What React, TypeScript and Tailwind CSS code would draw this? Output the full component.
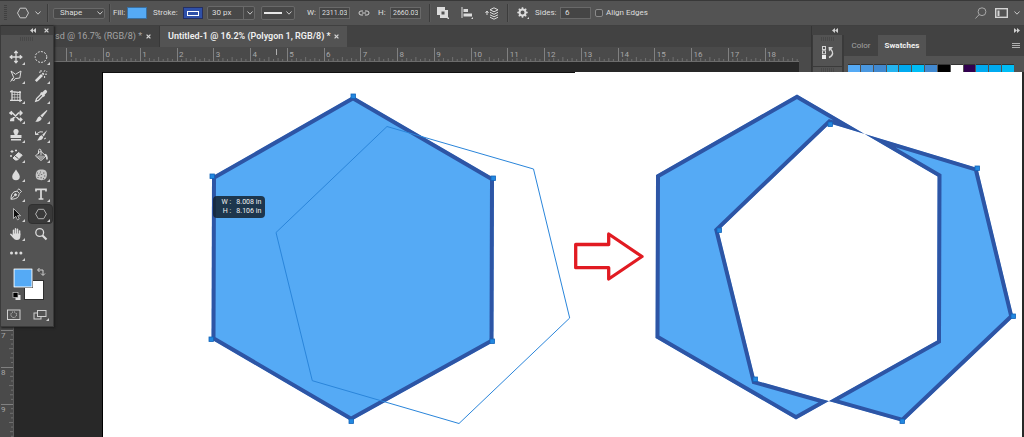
import React, { useState } from "react";

const swatches = [
  "bg-[#55aaf5]",
  "bg-[#4a98e0]",
  "bg-[#4189d0]",
  "bg-[#24b4f0]",
  "bg-[#00aaf0]",
  "bg-[#00bdf5]",
  "bg-[#4189d0]",
  "bg-black",
  "bg-white",
  "bg-[#32004f]",
  "bg-[#00aaf0]",
  "bg-[#00aaf0]",
  "bg-[#00bdf5]",
];

const Chevron = ({ className = "" }: { className?: string }) => (
  <svg viewBox="0 0 6 6" className={`w-1.5 h-1.5 shrink-0 ${className}`}>
    <path d="M0.5 1.5 3 4.2 5.5 1.5" fill="none" stroke="#c8c8c8" />
  </svg>
);

const DoubleArrow = ({ flip = false }: { flip?: boolean }) => (
  <svg viewBox="0 0 6 5" className="w-1.5 h-[5px]">
    <path
      d={flip ? "M0 0 3 2.5 0 5zM3 0 6 2.5 3 5z" : "M3 0 0 2.5 3 5zM6 0 3 2.5 6 5z"}
      fill="#d0d0d0"
    />
  </svg>
);

const Close = () => (
  <svg viewBox="0 0 6 6" className="w-[5px] h-[5px]">
    <path d="M0.7 0.7 5.3 5.3M5.3 0.7 0.7 5.3" stroke="#d4d4d4" strokeWidth="1.5" />
  </svg>
);

const Divider = () => <div className="w-0.5 h-[18px] shrink-0 border-l border-[#3c3c3c] bg-[#5a5a5a]" />;

const Grip = () => (
  <svg viewBox="0 0 14 4" className="w-3.5 h-1">
    <path d="M0 1H14M0 3H14" stroke="#3e3e3e" strokeDasharray="1 1" />
  </svg>
);

const tools: { name: string; icon: React.ReactNode; plain?: boolean }[] = [
  {
    name: "Move",
    icon: <path d="M7 2v10M2 7h10M5.3 3.2 7 1.2l1.7 2M5.3 10.8 7 12.8l1.7-2M3.2 5.3 1.2 7l2 1.7M10.8 5.3l2 1.7-2 1.7" strokeWidth="1.3" />,
  },
  { name: "Elliptical Marquee", icon: <ellipse cx="7" cy="7" rx="5.8" ry="5.4" strokeDasharray="2 1.2" /> },
  { name: "Polygonal Lasso", icon: <path d="M2 2l4.5 3.3L12 2l-1.2 7-4.6.6L4.6 12 2.8 10l2-1.2zM4 9l-2.4 3.6" /> },
  {
    name: "Magic Wand",
    icon: (
      <>
        <path d="M1.8 12.2 8 6" strokeWidth="2.6" />
        <path d="m8.5 5.5 1.2-1.2" strokeWidth="2" />
        <path d="M7 1v2M5 3.2h1.6M11 1.2l-1 1.6M11 5.2h2M10.6 7v2M12.4 2.6h.8" />
      </>
    ),
  },
  {
    name: "Perspective Crop",
    icon: (
      <>
        <path d="M3 1v11M1 2.5l11 1.2M11 2v11M1 11.3h12" strokeWidth="1.3" />
        <path d="M5.7 3v8M8.4 3.3v8M3 5.5h8M3 8.3h8" strokeWidth=".6" />
      </>
    ),
  },
  {
    name: "Eyedropper",
    icon: (
      <>
        <path d="M8 4.2 2.6 9.6l-.9 2.7 2.7-.9L9.8 6" strokeWidth="1.3" />
        <path d="m6.8 3.6 3.6 3.6" strokeWidth="2" />
        <path d="m9 5 2.4-2.4" strokeWidth="3.4" strokeLinecap="round" />
      </>
    ),
  },
  {
    name: "Content-Aware Move",
    icon: <path d="M1 4h2.5L10 10.5h2.5M1.5 10.5 4 9.5 9.5 4H13M10.8 1.8 13 4l-2.2 2.2M4.5 8v3.5H1M3 2.4 1 4l2 1.6M11 8.7l1.8 1.8-1.8 1.7" strokeWidth="1.5" />,
  },
  {
    name: "Brush",
    icon: (
      <>
        <path d="M12.8 1 6.400 6.6l1.800 1.900 5.200-6.800z" fill="#dcdcdc" stroke="none" />
        <path d="M5.800 7.200 7.700 9.200c-.4 2.600-3.200 3.600-6.700 3.600 2-.9 1.900-4.800 4.800-5.600z" fill="#dcdcdc" stroke="none" />
      </>
    ),
  },
  {
    name: "Clone Stamp",
    icon: (
      <path
        d="M7 1a2.5 2.5 0 0 1 2.200 3.900c-.8 1-.8 1.400-.7 2.100H12.500v3h-11V7h4c.1-.7.1-1.100-.7-2.100A2.500 2.500 0 0 1 7 1zM2 11h10v1.500H2z"
        fill="#dcdcdc"
        stroke="none"
      />
    ),
  },
  {
    name: "History Brush",
    icon: (
      <>
        <path d="M13.300 2 8.200 6.800l1.600 1.600zM7.600 7.300 9.300 9.100c-.4 2.700-2.800 3.500-6.300 3.400 1.900-.9 1.800-4.500 4.600-5.200z" fill="#dcdcdc" stroke="none" />
        <path d="M1.500 6.500 6 3.800l3 .2M1.500 3.500v3h3M10 11l2-1" />
      </>
    ),
  },
  {
    name: "Background Eraser",
    icon: (
      <>
        <path d="m5 9 4.500-4.500 3.700 2.700L8.500 12H6.300L4 10z" fill="#dcdcdc" />
        <path d="m6 8 3.500 2.700" stroke="#535353" />
        <path d="M3 2v3M1.500 3.500h3M7 1.500v2M6 2.500h2M2 7v2M1 8h2" />
      </>
    ),
  },
  {
    name: "Paint Bucket",
    icon: (
      <>
        <path d="M6.500 3 12 8l-5 4.500L1.500 8zM4.500 6V2.500c0-1.800 2.500-1.800 2.500 0V7" />
        <path d="m2 8 4-.8 5.500.8L7 12z" fill="#9a9a9a" stroke="none" />
        <path d="M11 6.500c1.500.3 2 1.500 2 5" strokeWidth="1.700" />
      </>
    ),
  },
  {
    name: "Blur",
    icon: <path d="M7 1.500c1.200 2.500 3.800 4.500 3.800 7a3.800 3.800 0 0 1-7.600 0c0-2.500 2.600-4.500 3.800-7z" fill="#dcdcdc" stroke="none" />,
  },
  {
    name: "Sponge",
    icon: (
      <>
        <path d="M3 3c2-2 7-1.800 9 0 1.500 2 1.300 6-.6 8-2 1.600-6.200 1.400-8.400 0C1 9 1.500 5 3 3z" fill="#c6c6c6" stroke="none" />
        <path d="M3 5h1m2-1h1m2 1h1.500M4 7.300h1.500m1.700-.8h1M10 8h1.300M3.500 9.500h1m2 .3h1.300m1.200.8h1M5.500 5.800h.8" stroke="#646464" />
      </>
    ),
  },
  {
    name: "Pen",
    icon: (
      <>
        <path d="M2 12.200c0-3 .6-5.800 3-7.300l3-.8 2.300 2.300-.8 3C8 11.600 5 12.200 2 12.200zM2 12.200l4-4M8.300 3.300l1.600-1.500 2.600 2.600-1.500 1.500" />
        <circle cx="6.500" cy="7.700" r="1" fill="#dcdcdc" />
      </>
    ),
  },
  {
    name: "Type",
    icon: <path d="M2 4.500V2.300h10v2.200M7 2.300v9.500M4.600 12h4.800" strokeWidth="1.700" />,
  },
  {
    name: "Path Selection",
    icon: <path d="M4.500 1.500v10l2.300-2.200 1.700 3.500 1.700-.8-1.600-3.300h3z" fill="#0d0d0d" stroke="#cfcfcf" strokeWidth=".8" />,
  },
  { name: "Polygon", icon: <path d="M4.300 2.300h5.400L12.400 7l-2.700 4.700H4.300L1.600 7z" stroke="#b0b0b0" /> },
  {
    name: "Hand",
    icon: (
      <>
        <path d="M4.500 8V3.200M6.500 7V1.800M8.500 7V2.200M10.600 8V4M4.300 10 1.800 7.300" strokeWidth="1.500" strokeLinecap="round" />
        <path d="M3.800 6.500h7.500v3.200c0 2-1.300 3.300-3.500 3.300-2 0-3-1-4.300-3.300z" fill="#dcdcdc" stroke="none" />
      </>
    ),
  },
  {
    name: "Zoom",
    plain: true,
    icon: (
      <>
        <circle cx="5.700" cy="5.500" r="3.900" strokeWidth="1.300" />
        <path d="m8.500 8.500 4 4" strokeWidth="2.200" />
      </>
    ),
  },
  {
    name: "Edit Toolbar",
    icon: (
      <g fill="#dcdcdc" stroke="none">
        <circle cx="2.500" cy="7" r="1.500" />
        <circle cx="7.200" cy="7" r="1.500" />
        <circle cx="11.900" cy="7" r="1.500" />
      </g>
    ),
  },
];

const ToolPanel = () => {
  const [active, setActive] = useState("Polygon");

  return (
    <aside className="absolute left-0 -top-px w-[54px] bg-[#535353] border border-[#3a3a3a] border-t-[#2e2e2e] shadow-[1px_1px_2px_#1c1c1c]">
      <div className="flex items-center justify-end gap-2 h-[9px] pr-1 bg-[#424242]">
        <DoubleArrow />
        <Close />
      </div>
      <div className="flex justify-center h-3 pt-0.5">
        <Grip />
      </div>
      <div className="grid grid-cols-2 grid-rows-11 h-[216px] pl-0.5">
        {tools.map((tool) => (
          <button
            key={tool.name}
            type="button"
            aria-label={`${tool.name} tool`}
            onClick={() => setActive(tool.name)}
            className={`relative flex items-center justify-center rounded-sm border ${
              active === tool.name ? "bg-[#393939] border-[#303030]" : "border-transparent"
            }`}
          >
            <svg viewBox="0 0 14 14" className="w-3.5 h-3.5" fill="none" stroke="#dcdcdc">
              {tool.icon}
            </svg>
            {!tool.plain && (
              <svg viewBox="0 0 3 3" className="absolute right-0.5 bottom-px w-[3px] h-[3px]">
                <path d="M3 0v3H0z" fill="#d0d0d0" />
              </svg>
            )}
          </button>
        ))}
      </div>
      <svg viewBox="0 0 52 42" className="w-full h-[42px]">
        <rect x="23.500" y="17.500" width="19" height="19" fill="#fff" stroke="#303030" />
        <rect x="12" y="5" width="20" height="20" fill="#303030" />
        <rect x="13" y="6" width="18" height="18" fill="#55aaf5" stroke="#fff" />
        <path d="M37 7h5v5M38.500 5 36.500 7l2 2M40 10.500l2 2 2-2" fill="none" stroke="#d0d0d0" />
        <rect x="14.500" y="32" width="5" height="5" fill="#e0e0e0" />
        <rect x="12" y="29.500" width="5" height="5" fill="#000" stroke="#c8c8c8" strokeWidth=".7" />
      </svg>
      <div className="flex justify-between h-[21px] pt-1 pl-1.5 pr-1">
        <button type="button" aria-label="Quick mask" className="w-3.5 h-3">
          <svg viewBox="0 0 14 12" className="w-3.5 h-3" fill="none" stroke="#d0d0d0">
            <rect x=".5" y="1" width="12.500" height="9.500" />
            <circle cx="6.700" cy="5.700" r="2.800" strokeDasharray="1.200 1" />
          </svg>
        </button>
        <button type="button" aria-label="Screen mode" className="w-4 h-3">
          <svg viewBox="0 0 16 12" className="w-4 h-3" stroke="#d0d0d0">
            <rect x="1" y="4" width="7" height="6" fill="none" />
            <rect x="4.500" y="1.500" width="8.500" height="6" fill="#535353" />
            <path d="M16 9v3h-3z" fill="#d0d0d0" stroke="none" />
          </svg>
        </button>
      </div>
    </aside>
  );
};

const OptionsBar = () => (
  <header className="flex items-center h-[26px] overflow-hidden border-t border-[#383838] border-b border-b-[#404040] text-[8px] text-[#dedede]">
    <svg viewBox="0 0 3 16" className="w-[3px] h-4 ml-1 mr-2.5 shrink-0">
      <path d="M1.500 0V16" stroke="#404040" strokeWidth="3" strokeDasharray="1 1" />
    </svg>
    <svg viewBox="0 0 12 12" className="w-3 h-3 shrink-0">
      <path d="M3.200 1.200h5.600L11.500 6 8.800 10.800H3.200L.5 6z" fill="none" stroke="#c8c8c8" />
    </svg>
    <Chevron className="ml-1.5 mr-1.5" />
    <Divider />
    <div className="relative flex items-center ml-1 mr-1">
      <select aria-label="Tool mode" className="appearance-none w-[52px] h-[11px] pl-1.5 rounded-xs border border-[#696969] bg-[#484848] leading-none">
        <option>Shape</option>
        <option>Path</option>
        <option>Pixels</option>
      </select>
      <Chevron className="absolute right-0.5 pointer-events-none" />
    </div>
    <Divider />
    <span className="w-3.5 ml-0.5 shrink-0">Fill:</span>
    <button type="button" aria-label="Fill colour" className="w-5 h-3 shrink-0 border border-[#3a6fa0] bg-[#55aaf5] mr-1.5" />
    <span className="w-[26px] mr-1 shrink-0">Stroke:</span>
    <button type="button" aria-label="Stroke colour" className="flex items-center justify-center w-5 h-3 shrink-0 border border-[#262f60] bg-[#2f50a8] mr-1">
      <span className="w-3 h-[5px] border border-white" />
    </button>
    <div className="relative flex items-center mr-1.5">
      <select aria-label="Stroke width" className="appearance-none w-[48px] h-3.5 pl-1 rounded-xs border border-[#696969] bg-[#484848] leading-none">
        <option>30 px</option>
      </select>
      <div className="absolute right-0 flex items-center justify-center w-3 h-3.5 border-l border-[#696969] pointer-events-none">
        <Chevron />
      </div>
    </div>
    <button type="button" aria-label="Stroke type" className="flex items-center gap-1 w-[34px] h-3.5 px-0.5 shrink-0 rounded-xs border border-[#696969] bg-[#484848]">
      <span className="flex-1 h-0.5 bg-[#e8e8e8]" />
      <Chevron />
    </button>
    <label htmlFor="w" className="w-3 ml-3">W:</label>
    <input id="w" defaultValue="2311.03" className="w-[31px] h-3 px-0.5 shrink-0 border border-[#696969] bg-[#454545] text-[7px]" />
    <svg viewBox="0 0 12 6" className="w-3 h-1.5 mx-2 shrink-0" fill="none" stroke="#d0d0d0">
      <path d="M5 1H3a2 2 0 0 0 0 4h2M7 1h2a2 2 0 0 1 0 4H7M4 3h4" />
    </svg>
    <label htmlFor="h" className="w-3">H:</label>
    <input id="h" defaultValue="2660.03" className="w-[31px] h-3 px-0.5 mr-2 shrink-0 border border-[#696969] bg-[#454545] text-[7px] text-right" />
    <Divider />
    <div className="flex items-center gap-3 ml-1.5 mr-2">
      <button type="button" aria-label="Path operations">
        <svg viewBox="0 0 12 12" className="block w-3 h-3">
          <path d="M0 0h8v3h3v8H3V8H0zM4.500 4.500v3h3v-3z" fill="#dcdcdc" fillRule="evenodd" />
          <path d="M12 10v2h-2z" fill="#dcdcdc" />
        </svg>
      </button>
      <button type="button" aria-label="Path alignment">
        <svg viewBox="0 0 12 12" className="block w-3 h-3">
          <path d="M.5 0h1v11h-1zM2.500 2H7v3H2.500zM2.500 6.500H11v3H2.500zM12 10v2h-2z" fill="#dcdcdc" />
        </svg>
      </button>
      <button type="button" aria-label="Path arrangement">
        <svg viewBox="0 0 14 13" className="block w-3.5 h-[13px]" fill="none" stroke="#dcdcdc">
          <path d="M2 8V4.500M.5 6 2 4l1.500 2M9 .8l4 2-4 2-4-2zM5 5.300l4 2 4-2M5 7.800l4 2 4-2M5 10.200l4 2 4-2" />
        </svg>
      </button>
    </div>
    <Divider />
    <svg viewBox="0 0 12 12" className="w-3 h-3 ml-2 mr-1.5 shrink-0">
      <circle cx="5.500" cy="5.500" r="3" fill="none" stroke="#dcdcdc" strokeWidth="2" />
      <path d="M5.500.3v2M5.500 8.700v2M.3 5.500h2M8.700 5.500h2M1.800 1.800l1.500 1.500M7.700 7.700l1.500 1.500M1.800 9.200l1.500-1.500M7.700 3.300l1.500-1.500" stroke="#dcdcdc" strokeWidth="1.600" />
      <path d="M12 10v2h-2z" fill="#dcdcdc" />
    </svg>
    <label htmlFor="sides" className="w-[25px]">Sides:</label>
    <input id="sides" defaultValue="6" className="w-[31px] h-3 px-1 mr-1 shrink-0 border border-[#696969] bg-[#454545]" />
    <input id="align" type="checkbox" className="appearance-none w-2 h-2 mr-[3px] shrink-0 rounded-xs border border-[#8a8a8a] bg-[#484848]" />
    <label htmlFor="align" className="whitespace-nowrap">Align Edges</label>
    <div className="flex items-center gap-2 ml-auto pr-1">
      <svg viewBox="0 0 12 12" className="w-3 h-3" fill="none" stroke="#a8a8a8">
        <circle cx="7" cy="4.700" r="3.900" />
        <path d="m4.200 7.500-3.700 4" />
      </svg>
      <div className="flex items-center gap-1.5">
        <svg viewBox="0 0 13 10" className="w-[13px] h-2.5">
          <rect x=".7" y=".7" width="11.600" height="8.600" fill="none" stroke="#d4d4d4" strokeWidth="1.400" />
          <path d="M2.500 2.500H4.500V8H2.500z" fill="#d4d4d4" />
        </svg>
        <Chevron />
      </div>
    </div>
  </header>
);

// one inch on the rulers, in pixels at the current zoom level
const INCH = 36.75;
const eighths = [1, 2, 3, 4, 5, 6, 7];

const HorizontalRuler = () => (
  <svg height="15" className="block w-full h-[15px] bg-[#4a4a4a]" fontSize="8" fill="#a8a8a8" stroke="none">
    {Array.from({ length: 20 }, (_, i) => i - 1).map((n) => {
      const x = 103.5 + n * INCH;
      return (
        <g key={n}>
          <path d={`M${Math.floor(x)}.5 1V14`} stroke="#808080" />
          {eighths.map((e) => (
            <path key={e} d={`M${x + (e * INCH) / 8} ${e === 4 ? 10 : e % 2 ? 12 : 11}V14`} stroke="#707070" />
          ))}
          <text x={x + 2} y="10">{Math.abs(n)}</text>
        </g>
      );
    })}
    <path d="M276.500 2V8" stroke="#b0b0b0" />
    <path d="M0 14.500H2000" stroke="#6c6c6c" />
  </svg>
);

const VerticalRuler = () => (
  <div className="w-3.5 shrink-0 overflow-hidden bg-[#4a4a4a] border-r border-[#5c5c5c]">
    <svg viewBox="0 0 13 366" className="block w-[13px] h-[366px]" fontSize="8" fill="#a8a8a8">
      {Array.from({ length: 10 }, (_, n) => {
        const y = n * 36.9;
        return (
          <g key={n}>
            <path d={`M1 ${Math.floor(y)}.5H13`} stroke="#808080" />
            {eighths.map((e) => (
              <path key={e} d={`M${e === 4 ? 9 : e % 2 ? 11 : 10} ${y + (e * INCH) / 8}H13`} stroke="#707070" />
            ))}
            <text x="1" y={y + 8}>{n}</text>
          </g>
        );
      })}
    </svg>
  </div>
);

const Dock = () => (
  <div className="flex flex-col w-[213px] shrink-0 border-l border-[#353535] bg-[#3a3a3a]">
    <div className="flex items-center justify-between h-[9px] pl-5 pr-1 bg-[#424242]">
      <DoubleArrow />
      <DoubleArrow flip />
    </div>
    <div className="flex flex-1 gap-0.5 pl-px">
      <div className="flex flex-col gap-px w-[29px]">
        <button type="button" aria-label="History" className="flex flex-col items-center gap-1 h-[31px] pt-0.5 bg-[#535353]">
          <Grip />
          <svg viewBox="0 0 13 15" className="w-[13px] h-[15px]" fill="none" stroke="#d4d4d4">
            <rect x="1.500" y="1.500" width="3" height="3" />
            <rect x="1.500" y="5.800" width="3" height="3" />
            <rect x="1" y="10" width="4" height="4" fill="#eee" stroke="none" />
            <path d="M8 12.500c4.500-2 4.500-5.500 1.500-8.500" strokeWidth="1.500" />
            <path d="M7.500 2h4.500L8 6.500z" fill="#d4d4d4" stroke="none" />
          </svg>
        </button>
        <div className="flex justify-center flex-1 pt-px bg-[#535353]">
          <Grip />
        </div>
      </div>
      <div className="flex flex-col flex-1">
        <div className="flex h-[21px] bg-[#424242] text-[8px]">
          <button type="button" className="w-[34px] text-[#a4a4a4]">Color</button>
          <button type="button" className="w-12 bg-[#535353] font-bold text-[#f0f0f0]">Swatches</button>
          <svg viewBox="0 0 8 6" className="w-2 h-1.5 ml-auto mr-1 self-center">
            <path d="M0 .5h8M0 2.500h8M0 4.500h8" stroke="#b0b0b0" />
          </svg>
        </div>
        <div className="flex flex-1 gap-px pt-2 pl-1 pr-2.5 bg-[#535353]">
          {swatches.map((color, i) => (
            <div key={i} className={`flex-1 border-t border-[#333333] ${color}`} />
          ))}
        </div>
      </div>
    </div>
  </div>
);

const Handles = ({ points }: { points: number[][] }) => (
  <>
    {points.map(([x, y]) => (
      <rect key={`${x}-${y}`} x={x - 2} y={y - 2} width="4.500" height="4.500" fill="#2288e0" stroke="#1263b8" strokeWidth=".8" />
    ))}
  </>
);

const hexBefore = "M353 96 494 178 493.500 342 351 421 211.500 339.500 212 176.500z";
const hexAfter = "M797 94.500 937.500 176.500 937 340.500 796 419.500 655.500 338 656 175z";
const overlap = "M830 123.500 977.500 168 1013.500 317 903 422 755.500 380.500 718.500 230.500z";

const Artwork = () => (
  <svg viewBox="103 72 919 365" className="block w-full h-auto">
    <clipPath id="before">
      <path d={hexBefore} />
    </clipPath>
    <clipPath id="after">
      <path d={`${hexAfter}${overlap}`} clipRule="evenodd" />
    </clipPath>
    <path d="M103 72.500H575" stroke="#111" />
    <path d={hexBefore} fill="#55aaf5" stroke="#2d55a5" strokeWidth="8" clipPath="url(#before)" />
    <path d="M387 126.500 533.500 169 569.700 318 459 423.500 312.300 380.700 276 232.500z" fill="none" stroke="#2a85da" />
    <Handles points={[[353, 96], [493, 178], [492, 341], [351, 421], [211, 339], [212, 176]]} />
    <path
      d="M575.700 244.500H608.700V234L642 256.500 608.700 279V267.700H575.700z"
      fill="#fff"
      stroke="#e11b22"
      strokeWidth="3.300"
      strokeLinejoin="round"
    />
    <path
      d={`${hexAfter}${overlap}`}
      fill="#55aaf5"
      fillRule="evenodd"
      stroke="#2d55a5"
      strokeWidth="8"
      clipPath="url(#after)"
    />
    <Handles points={[[830, 124], [977, 168], [1013, 316], [902, 421], [755, 379], [719, 230]]} />
  </svg>
);

const App = () => {
  return (
    <div className="flex flex-col min-h-screen w-full overflow-hidden bg-[#282828] font-[Roboto,'Noto_Sans',sans-serif]">
      <div className="bg-[#535353]">
        <OptionsBar />
      </div>
      <main className="relative flex flex-col flex-1">
        <div className="flex h-[46px]">
          <div className="flex flex-col flex-1 min-w-0 bg-[#4a4a4a]">
            <nav className="flex h-[21px] bg-[#424242] text-[9px] whitespace-nowrap">
              <button type="button" className="flex items-center justify-between w-[160px] pl-[55px] pr-2 border-r border-[#383838] text-[#a4a4a4]">
                sd @ 16.7% (RGB/8) *
                <Close />
              </button>
              <button type="button" className="flex items-center justify-between w-[187px] pl-2 pr-2 bg-[#535353] font-semibold text-[#f0f0f0]">
                Untitled-1 @ 16.2% (Polygon 1, RGB/8) *
                <Close />
              </button>
            </nav>
            <div className="flex flex-col flex-1 mr-3">
              <HorizontalRuler />
              <div className="flex-1 bg-[#282828]" />
            </div>
          </div>
          <Dock />
        </div>
        <div className="flex flex-1 pr-0.5">
          <VerticalRuler />
          <div className="w-[89px] shrink-0 border-r border-black" />
          <div className="relative flex-1 bg-white">
            <Artwork />
            <div className="absolute left-[12%] top-[34%] w-[52px] py-0.5 px-1 rounded-sm bg-[#14222f]/85 text-[7px] leading-[9px] text-right text-[#f0f0f0] whitespace-pre">
              <p>W :   8.008 in</p>
              <p>H :   8.106 in</p>
            </div>
          </div>
        </div>
        <ToolPanel />
      </main>
    </div>
  );
};

export default App;
